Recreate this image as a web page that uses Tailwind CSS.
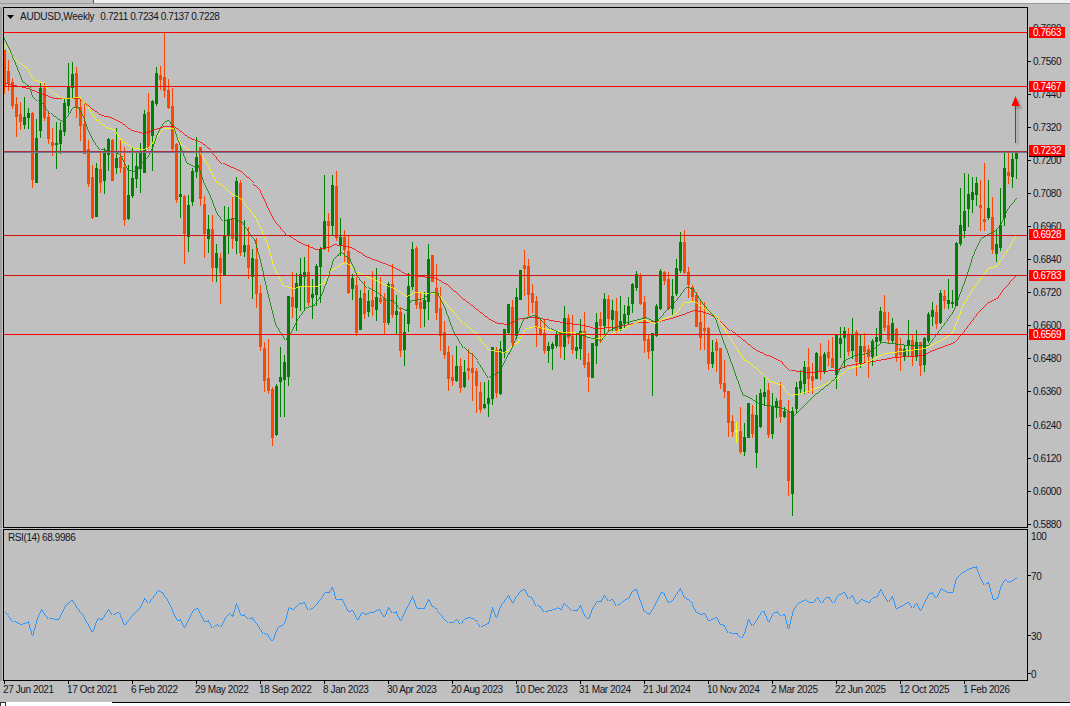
<!DOCTYPE html>
<html lang="en">
<head>
  <meta charset="UTF-8">
  <title>AUDUSD,Weekly</title>
  <script src="https://cdn.jsdelivr.net/npm/@tailwindcss/browser@4"></script>
</head>
<body class="w-[1070px] h-[706px] overflow-hidden bg-[#c0c0c0] font-['Liberation_Sans',sans-serif] text-[10px] leading-[10px] tracking-[-0.4px] text-[#14141e] flex flex-col">

  <div class="h-[3px] bg-[#f0f0f0] flex shrink-0"><div class="w-[93px] bg-[#c0c0c0]"></div><div class="w-px bg-[#555]"></div></div>
  <div class="h-px bg-[#9a9a9a] shrink-0"></div>
  <div class="h-[3px] shrink-0"></div>

  <!-- price chart -->
  <div class="flex h-[521px] shrink-0 border-l-2 border-[#a0a0a0] pl-px">
    <div class="relative w-[1025px] border border-black">
      <svg id="price" class="block w-[1023px] h-[519px]" viewBox="4 8 1023 519" shape-rendering="crispEdges">
        <defs><filter id="soft" x="-300%" y="-20%" width="700%" height="140%"><feGaussianBlur stdDeviation="1.2"/></filter></defs>
        <g id="bars"></g>
        <g id="mas" fill="none" stroke-width="0.8"></g>
        <g fill="#ff0000">
          <rect x="4" y="32" width="1023" height="1"/>
          <rect x="4" y="86" width="1023" height="1"/>
          <rect x="4" y="235" width="1023" height="1" fill="#d81010"/>
          <rect x="4" y="275" width="1023" height="1" fill="#d81010"/>
          <rect x="4" y="334" width="1023" height="1"/>
          <rect x="4" y="151" width="1023" height="1" fill="#a83040"/>
          <rect x="4" y="152" width="1023" height="1" fill="#707a88"/>
        </g>
        <g fill="#000" opacity="0.25" filter="url(#soft)">
          <rect x="1017" y="107" width="1" height="38"/>
          <polygon points="1018,99 1022,109 1014,109"/>
        </g>
        <g fill="#ff0000">
          <rect x="1015" y="104" width="1" height="39"/>
          <polygon points="1015.5,96 1019.5,106 1011.5,106" shape-rendering="auto"/>
        </g>
      </svg>
      <div class="absolute left-[3px] top-[4px] flex items-center gap-[6px]">
        <svg class="w-[7px] h-[4px]" viewBox="0 0 7 4"><polygon points="0,0 7,0 3.5,4" fill="#000"/></svg>
        <span class="tracking-[-0.25px]">AUDUSD,Weekly</span>
        <span>0.7211 0.7234 0.7137 0.7228</span>
      </div>
    </div>
    <!-- price axis -->
    <div class="relative w-[42px]">
      <div class="absolute left-[5px] top-[17px]">0.7680</div>
      <div class="absolute left-[5px] top-[50px]">0.7560</div>
      <div class="absolute left-[5px] top-[83px]">0.7440</div>
      <div class="absolute left-[5px] top-[116px]">0.7320</div>
      <div class="absolute left-[5px] top-[149px]">0.7200</div>
      <div class="absolute left-[5px] top-[182px]">0.7080</div>
      <div class="absolute left-[5px] top-[215px]">0.6960</div>
      <div class="absolute left-[5px] top-[248px]">0.6840</div>
      <div class="absolute left-[5px] top-[281px]">0.6720</div>
      <div class="absolute left-[5px] top-[314px]">0.6600</div>
      <div class="absolute left-[5px] top-[347px]">0.6480</div>
      <div class="absolute left-[5px] top-[380px]">0.6360</div>
      <div class="absolute left-[5px] top-[414px]">0.6240</div>
      <div class="absolute left-[5px] top-[447px]">0.6120</div>
      <div class="absolute left-[5px] top-[480px]">0.6000</div>
      <div class="absolute left-[5px] top-[513px]">0.5880</div>

      <div class="absolute left-0 top-[54px] w-[3px] h-px bg-black"></div>
      <div class="absolute left-0 top-[87px] w-[3px] h-px bg-black"></div>
      <div class="absolute left-0 top-[120px] w-[3px] h-px bg-black"></div>
      <div class="absolute left-0 top-[153px] w-[3px] h-px bg-black"></div>
      <div class="absolute left-0 top-[186px] w-[3px] h-px bg-black"></div>
      <div class="absolute left-0 top-[219px] w-[3px] h-px bg-black"></div>
      <div class="absolute left-0 top-[252px] w-[3px] h-px bg-black"></div>
      <div class="absolute left-0 top-[285px] w-[3px] h-px bg-black"></div>
      <div class="absolute left-0 top-[318px] w-[3px] h-px bg-black"></div>
      <div class="absolute left-0 top-[351px] w-[3px] h-px bg-black"></div>
      <div class="absolute left-0 top-[384px] w-[3px] h-px bg-black"></div>
      <div class="absolute left-0 top-[418px] w-[3px] h-px bg-black"></div>
      <div class="absolute left-0 top-[451px] w-[3px] h-px bg-black"></div>
      <div class="absolute left-0 top-[484px] w-[3px] h-px bg-black"></div>
      <div class="absolute left-0 top-[517px] w-[3px] h-px bg-black"></div>

      <div class="absolute left-px top-[20px] w-[36px] h-[11px] leading-[11px] bg-[#ff0000] text-white text-center">0.7663</div>
      <div class="absolute left-px top-[74px] w-[36px] h-[11px] leading-[11px] bg-[#ff0000] text-white text-center">0.7467</div>
      <div class="absolute left-px top-[149px] w-[36px] h-px bg-black"></div>
      <div class="absolute left-px top-[138px] w-[36px] h-[11px] leading-[11px] bg-[#ff0000] text-white text-center">0.7232</div>
      <div class="absolute left-px top-[222px] w-[36px] h-[11px] leading-[11px] bg-[#ff0000] text-white text-center">0.6928</div>
      <div class="absolute left-px top-[263px] w-[36px] h-[11px] leading-[11px] bg-[#ff0000] text-white text-center">0.6783</div>
      <div class="absolute left-px top-[322px] w-[36px] h-[11px] leading-[11px] bg-[#ff0000] text-white text-center">0.6569</div>
    </div>
  </div>

  <div class="h-px shrink-0"></div>

  <!-- RSI pane -->
  <div class="flex h-[152px] shrink-0 border-l-2 border-[#a0a0a0] pl-px">
    <div class="relative w-[1025px] border border-black">
      <svg class="block w-[1023px] h-[150px]" viewBox="4 530 1023 150" shape-rendering="crispEdges">
        <polyline id="rsi" fill="none" stroke="#1e90ff" stroke-width="0.9"/>
      </svg>
      <div class="absolute left-[4px] top-[3px]">RSI(14) 68.9986</div>
    </div>
    <div class="relative w-[42px]">
      <div class="absolute left-[3px] top-[3px]">100</div>
      <div class="absolute left-[3px] top-[43px]">70</div>
      <div class="absolute left-[3px] top-[103px]">30</div>
      <div class="absolute left-[3px] top-[141px]">0</div>
      <div class="absolute left-0 top-[46px] w-[3px] h-px bg-black"></div>
      <div class="absolute left-0 top-[106px] w-[3px] h-px bg-black"></div>
      <div class="absolute left-0 top-[144px] w-[3px] h-px bg-black"></div>
    </div>
  </div>

  <!-- time axis -->
  <div class="flex h-[21px] shrink-0 pl-[4px] whitespace-nowrap">
    <div class="w-[64px]"><div class="w-px h-[3px] bg-black"></div><div class="mt-[1px] -ml-px">27 Jun 2021</div></div>
    <div class="w-[64px]"><div class="w-px h-[3px] bg-black"></div><div class="mt-[1px] -ml-px">17 Oct 2021</div></div>
    <div class="w-[64px]"><div class="w-px h-[3px] bg-black"></div><div class="mt-[1px] -ml-px">6 Feb 2022</div></div>
    <div class="w-[64px]"><div class="w-px h-[3px] bg-black"></div><div class="mt-[1px] -ml-px">29 May 2022</div></div>
    <div class="w-[64px]"><div class="w-px h-[3px] bg-black"></div><div class="mt-[1px] -ml-px">18 Sep 2022</div></div>
    <div class="w-[64px]"><div class="w-px h-[3px] bg-black"></div><div class="mt-[1px] -ml-px">8 Jan 2023</div></div>
    <div class="w-[64px]"><div class="w-px h-[3px] bg-black"></div><div class="mt-[1px] -ml-px">30 Apr 2023</div></div>
    <div class="w-[64px]"><div class="w-px h-[3px] bg-black"></div><div class="mt-[1px] -ml-px">20 Aug 2023</div></div>
    <div class="w-[64px]"><div class="w-px h-[3px] bg-black"></div><div class="mt-[1px] -ml-px">10 Dec 2023</div></div>
    <div class="w-[64px]"><div class="w-px h-[3px] bg-black"></div><div class="mt-[1px] -ml-px">31 Mar 2024</div></div>
    <div class="w-[64px]"><div class="w-px h-[3px] bg-black"></div><div class="mt-[1px] -ml-px">21 Jul 2024</div></div>
    <div class="w-[64px]"><div class="w-px h-[3px] bg-black"></div><div class="mt-[1px] -ml-px">10 Nov 2024</div></div>
    <div class="w-[64px]"><div class="w-px h-[3px] bg-black"></div><div class="mt-[1px] -ml-px">2 Mar 2025</div></div>
    <div class="w-[64px]"><div class="w-px h-[3px] bg-black"></div><div class="mt-[1px] -ml-px">22 Jun 2025</div></div>
    <div class="w-[64px]"><div class="w-px h-[3px] bg-black"></div><div class="mt-[1px] -ml-px">12 Oct 2025</div></div>
    <div class="w-[64px]"><div class="w-px h-[3px] bg-black"></div><div class="mt-[1px] -ml-px">1 Feb 2026</div></div>
  </div>

  <div class="h-[4px] flex shrink-0 bg-white">
    <div class="w-[6px] border border-[#333] border-b-0"></div>
    <div class="w-[106px]"></div>
    <div class="flex-1 border-t border-black"></div>
  </div>

  <script>
    // [high, body top, body bottom, low, colour] in screen y; one bar every 4px
    const bars = [
      [50,50,85,93,0],[60,71,83,90,0],[78,82,105,108,0],[97,104,116,136,0],[102,114,121,129,0],[97,117,124,128,1],[108,113,117,128,1],[112,113,179,187,0],
      [119,138,182,182,1],[83,88,130,137,1],[83,88,117,120,0],[112,117,138,143,0],[128,142,145,155,0],[122,143,144,168,1],[122,130,143,153,1],[98,103,131,135,1],
      [63,87,105,112,1],[62,74,87,97,1],[67,73,106,117,0],[100,107,125,140,0],[103,124,153,153,0],[140,149,183,186,0],[165,177,217,218,0],[163,168,216,216,1],
      [153,169,182,192,0],[148,153,180,193,1],[138,139,154,170,1],[139,140,180,180,0],[128,158,167,173,1],[140,157,167,172,0],[147,167,219,225,0],[165,195,218,219,1],
      [147,178,195,197,1],[152,166,178,187,1],[143,153,168,192,1],[110,114,172,172,1],[93,112,147,148,0],[100,101,135,170,1],[67,73,103,105,1],[66,75,79,89,0],
      [32,77,90,97,0],[79,90,107,108,0],[88,106,148,151,0],[143,144,199,202,0],[145,194,196,217,1],[195,196,233,263,0],[195,205,236,251,1],[168,171,201,205,1],
      [137,157,171,177,1],[147,147,198,205,0],[196,204,233,257,0],[215,229,238,252,1],[215,229,267,281,0],[244,253,267,281,1],[253,258,272,303,0],[206,235,274,275,1],
      [207,220,235,253,1],[197,218,238,248,0],[177,181,240,253,1],[180,183,252,255,0],[220,245,251,256,1],[227,245,267,278,0],[249,258,276,298,1],[238,259,293,307,0],
      [285,293,346,350,0],[342,348,380,391,0],[339,378,390,393,0],[387,389,437,445,0],[384,386,434,435,1],[347,377,381,416,1],[355,362,379,416,1],[296,296,376,385,1],
      [272,297,306,317,0],[273,283,307,330,1],[258,274,285,310,1],[257,272,276,310,1],[244,272,302,305,0],[279,294,297,318,1],[264,266,294,305,1],[247,249,266,302,1],
      [175,221,248,249,1],[213,221,225,251,0],[175,185,225,235,1],[171,186,237,240,0],[218,237,245,255,1],[230,237,249,262,0],[235,251,292,293,0],[274,278,288,299,1],
      [277,285,332,335,0],[290,298,329,329,1],[281,293,313,318,0],[290,301,311,316,1],[271,300,306,315,0],[268,297,309,320,1],[277,298,301,303,0],[293,298,322,333,0],
      [282,284,322,324,1],[264,284,314,317,0],[295,311,314,333,1],[307,312,350,356,0],[314,332,349,365,1],[273,286,323,331,1],[242,249,286,289,1],[246,248,304,308,0],
      [292,302,308,327,0],[292,300,308,326,1],[244,259,301,319,1],[255,255,281,281,0],[264,288,312,319,0],[287,308,335,350,0],[321,332,354,358,0],[346,352,378,390,0],
      [355,377,380,385,0],[346,366,380,381,1],[358,366,387,392,0],[360,372,386,387,1],[349,368,370,379,0],[353,368,372,400,0],[368,371,385,412,0],[382,392,409,412,0],
      [382,404,407,408,1],[380,398,403,416,1],[347,347,398,404,1],[347,350,392,397,0],[341,349,393,394,1],[329,329,352,357,1],[304,304,332,333,1],[300,307,342,346,0],
      [288,297,335,338,1],[270,270,299,299,1],[250,265,268,295,0],[259,266,294,315,0],[284,293,302,312,0],[296,301,327,346,0],[318,327,333,335,0],[320,333,350,353,0],
      [342,346,350,362,1],[342,344,348,369,1],[332,335,345,347,1],[332,333,346,357,0],[306,318,346,359,1],[314,318,337,343,0],[315,336,349,353,0],[335,347,350,358,1],
      [319,331,348,359,1],[312,331,364,367,0],[353,362,376,391,0],[343,343,377,377,1],[313,322,345,363,1],[312,319,325,342,0],[293,299,325,333,1],[295,299,318,330,0],
      [300,310,319,330,1],[298,311,330,332,0],[296,321,328,330,1],[305,314,322,327,1],[297,306,314,323,1],[283,284,303,312,1],[271,274,287,290,1],[273,275,303,304,0],
      [296,302,340,352,0],[335,339,351,358,0],[333,333,350,395,1],[304,306,335,336,1],[269,271,308,309,1],[271,272,280,284,0],[272,279,308,309,0],[279,296,308,314,1],
      [259,268,293,295,1],[232,242,270,272,1],[230,242,272,273,0],[267,272,284,297,0],[285,287,296,300,0],[292,295,326,326,0],[300,322,337,349,0],[302,328,330,349,0],
      [327,328,363,369,0],[340,352,363,367,1],[339,342,350,371,0],[348,348,383,388,0],[360,383,391,397,0],[391,391,422,436,0],[415,421,431,436,0],[422,430,431,442,2],
      [407,431,451,453,0],[423,437,451,455,1],[403,403,437,437,1],[405,414,433,437,0],[395,415,452,467,1],[389,393,426,427,1],[377,392,396,405,1],[383,390,434,437,0],
      [393,406,433,438,1],[398,401,407,417,1],[382,400,416,422,0],[407,411,416,417,1],[400,411,480,495,0],[407,411,493,515,1],[382,387,408,412,1],[370,381,388,393,1],
      [361,367,383,393,1],[348,367,378,392,0],[363,376,380,393,0],[352,353,378,378,1],[343,356,371,379,0],[352,354,371,373,1],[340,352,357,365,0],[337,358,367,367,0],
      [335,335,374,388,1],[327,338,343,357,1],[327,331,337,367,1],[328,334,351,355,0],[318,334,350,358,1],[330,332,361,375,0],[334,346,362,367,1],[333,346,351,363,0],
      [345,349,356,377,0],[339,341,356,365,1],[328,337,341,355,1],[307,311,340,342,1],[295,312,327,330,0],[312,325,339,342,0],[318,323,340,342,1],[328,329,356,361,0],
      [338,348,354,370,0],[345,349,356,360,1],[320,340,344,355,1],[335,340,356,365,0],[330,342,356,360,1],[342,342,365,375,0],[337,338,364,371,1],[312,314,340,342,1],
      [302,310,316,325,1],[305,312,323,328,0],[290,293,322,323,1],[290,296,300,308,0],[279,300,303,308,1],[290,302,303,307,1],[242,243,305,305,1],[188,225,243,245,1],
      [173,211,230,237,1],[174,194,208,226,1],[177,192,199,212,1],[177,183,194,205,1],[180,205,207,230,0],[163,219,221,230,0],[180,208,217,219,1],[197,217,249,253,0],
      [230,244,253,261,1],[188,225,247,250,1],[153,168,217,225,1],[153,172,175,183,0],[152,159,176,187,1],[152,152,158,178,1]
    ];
    const barColours = ['#ff4500', '#008000', '#ffff00'];

    const maRed = [4,83,13,85,27,88,37,92,45,95,53,98,65,98,78,98,90,108,100,115,110,117,120,122,130,130,143,133,157,128,163,126,173,126,187,137,200,142,210,150,222,163,240,171,253,183,260,190,273,218,287,235,300,243,315,249,328,247,333,244,350,247,367,257,383,263,393,267,405,274,427,277,433,277,447,285,460,297,473,307,487,318,497,323,507,324,520,318,533,317,550,320,567,323,583,325,593,328,613,327,637,322,657,321,673,317,693,310,700,311,717,317,730,330,745,342,755,350,767,355,782,362,790,370,807,372,833,370,847,365,860,363,877,360,893,357,920,355,937,348,953,342,963,331,977,312,987,302,997,297,1003,288,1015,275];
    const maYellow = [4,43,12,55,20,63,28,70,35,80,43,83,50,90,58,97,63,98,80,97,87,105,97,120,105,127,115,130,123,142,132,148,142,149,148,147,155,137,163,128,173,128,182,145,190,152,200,152,207,163,217,182,230,193,242,200,253,213,257,220,267,242,273,265,284,286,293,288,300,286,315,286,323,282,330,270,343,262,350,265,357,272,370,278,385,285,393,288,405,296,413,292,427,293,438,293,450,307,463,323,477,335,490,350,503,352,517,342,525,328,533,326,550,330,563,332,583,333,593,339,600,337,613,332,633,323,643,319,653,323,675,313,683,302,693,301,710,313,718,318,730,337,745,360,757,370,770,381,783,386,790,395,800,393,817,387,837,377,847,368,860,365,883,353,900,351,923,348,943,338,952,332,963,303,973,287,987,268,997,265,1005,252,1015,235];
    const maGreen = [4,37,10,50,17,67,23,82,30,88,32,95,37,100,43,104,50,113,57,119,62,121,67,115,72,107,78,107,83,115,87,127,93,140,100,149,107,150,115,152,122,157,128,170,135,171,140,163,147,156,152,147,157,132,163,122,168,119,173,125,177,137,183,153,187,163,192,166,198,165,203,180,210,195,217,213,223,220,233,218,243,223,255,240,263,273,270,303,275,323,285,339,290,332,298,317,305,307,313,305,322,292,328,275,333,258,340,252,350,259,357,275,367,287,375,291,385,300,393,300,400,308,405,310,410,300,420,299,430,292,438,293,445,308,453,330,463,347,477,360,488,377,500,370,513,343,523,318,532,315,540,318,550,328,560,333,567,335,577,333,587,337,600,340,608,330,623,323,633,320,645,317,655,322,665,310,675,300,685,287,693,288,703,303,715,317,720,332,727,350,735,373,743,395,748,397,757,403,783,408,793,415,803,405,813,395,823,387,835,377,843,360,853,355,867,353,880,342,890,343,907,345,927,345,940,328,953,310,967,273,975,248,980,238,990,232,995,230,1002,220,1007,208,1016,197];

    // rsi points read at 3x, so they are x*3 / y*3 from an origin
    const rsiA = [13,277,25,285,40,303,60,313,85,303,97,345,110,290,122,263,145,295,170,298,180,285,195,253,217,238,230,260,245,280,277,333,290,293,303,297,325,265,337,283,350,277,360,283,373,313,395,282,420,258,433,232,445,247,470,210,490,220,505,240,530,300,540,297,553,320,575,270,590,262,613,303,625,300,637,320,650,310,660,318,675,288,685,278,697,288,709,247,722,285,733,283,745,295,757,290,775,315,790,340,805,345,817,360,830,320,845,313,855,300,865,262,877,268,895,250,913,247,925,268,937,262,950,245,973,217,985,217,997,197,1009,237,1025,238];
    const rsiB = [10,122,25,153,37,147,50,178,62,155,73,163,85,155,97,157,110,148,120,150,132,167,145,137,157,157,168,153,181,181,217,106,230,145,245,145,253,140,265,115,277,137,290,150,325,187,337,187,349,175,361,190,373,175,385,172,397,175,410,185,421,199,445,186,457,137,469,170,481,135,505,103,517,127,529,105,541,90,553,85,565,107,577,113,589,135,601,138,613,153,637,147,649,140,661,148,673,125,697,151,709,151,721,133,733,163,745,175,757,140,769,122,781,122,793,103,805,120,817,115,829,135,853,118,865,112,877,90,889,85,913,153,925,162,937,145,961,95,973,98,985,127,997,118,1021,80,1033,110,1057,128,1069,155,1081,162,1093,157,1105,180,1129,167,1141,192,1153,195,1165,217];
    const rsiC = [37,340,50,340,62,352,73,335,85,295,97,315,122,273,133,273,145,303,160,275,170,273,182,285,193,280,205,325,218,265,230,250,253,238,265,247,277,247,290,228,302,245,314,232,326,232,338,245,350,225,373,213,385,235,397,223,409,250,421,238,445,247,457,232,469,228,481,205,493,225,505,242,517,226,529,265,565,243,577,260,589,247,601,270,625,218,637,217,649,232,661,205,673,213,685,216,697,215,709,172,721,158,745,145,769,138,781,172,793,193,805,183,818,236,830,232,842,192,853,177,865,185,887,172];

    function pts(list, ox, oy, scale) {
      let out = '';
      for (let i = 0; i < list.length; i += 2) {
        out += (ox + Math.round(list[i] / scale) + 0.5) + ',' + (oy + Math.round(list[i + 1] / scale) + 0.5) + ' ';
      }
      return out;
    }

    let barSvg = '';
    bars.forEach((b, i) => {
      const x = 4 + 4 * i;
      const c = barColours[b[4]];
      barSvg += `<rect x="${x}" y="${b[0]}" width="1" height="${b[3] - b[0] + 1}" fill="${c}"/>`;
      barSvg += `<rect x="${x - 1}" y="${b[1]}" width="3" height="${b[2] - b[1] + 1}" fill="${c}"/>`;
    });
    document.getElementById('bars').innerHTML = barSvg;

    document.getElementById('mas').innerHTML =
      `<polyline points="${pts(maRed, 0, 0, 1)}" stroke="#ff0000"/>` +
      `<polyline points="${pts(maYellow, 0, 0, 1)}" stroke="#ffff00"/>` +
      `<polyline points="${pts(maGreen, 0, 0, 1)}" stroke="#008000"/>`;

    document.getElementById('rsi').setAttribute('points',
      pts(rsiA, 0, 520, 3) + pts(rsiB, 340, 560, 3) + pts(rsiC, 720, 520, 3));
  </script>
</body>
</html>
